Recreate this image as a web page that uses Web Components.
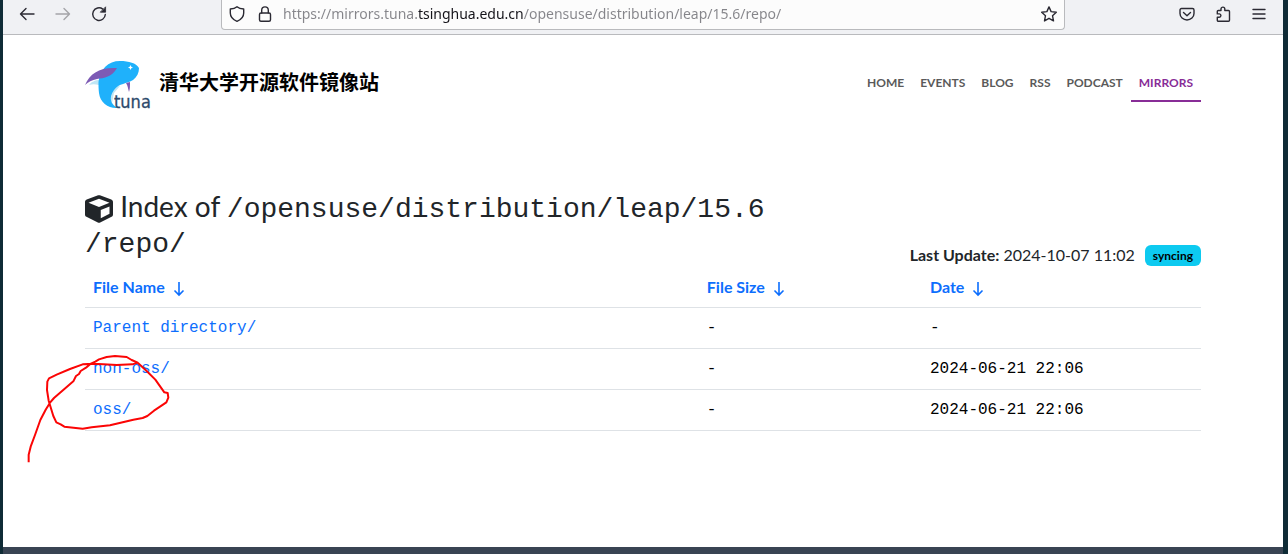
<!DOCTYPE html>
<html lang="zh-CN">
<head>
<meta charset="utf-8">
<title>Index of /opensuse/distribution/leap/15.6/repo/</title>
<style>
  body {
    margin: 0;
    background: #0f2b36;
    font-family: Lato, "Noto Sans CJK SC", sans-serif;
    font-size: 16px;
    line-height: 24px;
    color: #212529;
  }
</style>
</head>
<body>

<browser-window>
  <browser-toolbar slot="toolbar" url="https://mirrors.tuna.tsinghua.edu.cn/opensuse/distribution/leap/15.6/repo/"></browser-toolbar>
  <site-header>
    <nav-link href="#home">HOME</nav-link>
    <nav-link href="#events">EVENTS</nav-link>
    <nav-link href="#blog">BLOG</nav-link>
    <nav-link href="#rss">RSS</nav-link>
    <nav-link href="#podcast">PODCAST</nav-link>
    <nav-link href="#mirrors" active>MIRRORS</nav-link>
  </site-header>
  <index-heading updated="2024-10-07 11:02">
    <status-badge slot="status">syncing</status-badge>
  </index-heading>
  <file-table>
    <pen-mark></pen-mark>
  </file-table>
</browser-window>

<script>
const ICONS = {
  back: `<path d="M15 8H1.500M7 2.500 1.500 8 7 13.500"/>`,
  forward: `<path d="M1 8h13.500M9 2.500 14.500 8 9 13.500"/>`,
  reload: `<path d="M14.300 8.500A6.300 6.300 0 1 1 11.800 3.100"/><path d="M14.600 1.200v5h-5z" fill="currentColor" stroke-width="0.800"/>`,
  shield: `<path d="M8 .8C6.300 2.300 4 2.900 1.300 3v4c0 3.600 2.500 6.600 6.700 8.300 4.200-1.700 6.700-4.700 6.700-8.300V3C12 2.900 9.700 2.300 8 .8z"/>`,
  lock: `<rect x="2.500" y="7" width="11" height="8.300" rx="1.500"/><path d="M4.700 7V4.200a3.300 3.300 0 0 1 6.600 0V7"/>`,
  star: `<path d="m8 .9 2.100 4.700 5.200.6-3.800 3.500 1 5.200L8 12.300l-4.500 2.600 1-5.200L.7 6.200l5.200-.6z"/>`,
  pocket: `<path d="M2.500 2.500h11A1.500 1.500 0 0 1 15 4v3.500a7 6.500 0 0 1-14 0V4a1.500 1.500 0 0 1 1.500-1.500z"/><path d="M4.500 6.500 8 9.700l3.500-3.200"/>`,
  puzzle: `<path d="M6 4.500V3a1.900 1.900 0 0 1 3.800 0v1.500h3.700a1 1 0 0 1 1 1v8.700a1 1 0 0 1-1 1H3.300a1 1 0 0 1-1-1v-2.900h1.900a1.700 1.700 0 0 0 0-3.400H2.300V5.500a1 1 0 0 1 1-1z"/>`,
  menu: `<path d="M2 3.500h12M2 8h12M2 12.500h12"/>`
};

class ToolIcon extends HTMLElement {
  constructor() {
    super();
    this.attachShadow({ mode: "open" });
  }

  connectedCallback() {
    this.shadowRoot.innerHTML = `
      <style>
        :host { display: block; width: 16px; height: 16px; }
        svg { display: block; fill: none; stroke: currentColor; stroke-width: 1.4; stroke-linejoin: round; stroke-linecap: round; }
      </style>
      <svg width="16" height="16" viewBox="0 0 16 16" aria-hidden="true">${ICONS[this.getAttribute("name")]}</svg>
    `;
  }
}

class BrowserToolbar extends HTMLElement {
  constructor() {
    super();
    this.attachShadow({ mode: "open" });
  }

  get styles() {
    return `
      :host {
        display: flex;
        align-items: start;
        justify-content: space-between;
        height: 34px;
        background: #f0f1f4;
        border-bottom: 1px solid #b9babd;
        color: #2b2a33;
      }

      button {
        border: 0;
        padding: 0;
        background: none;
        color: inherit;
      }

      button:disabled { color: #a4a4a8; }

      .group {
        display: flex;
        gap: 20px;
        padding: 6px 16px;
      }

      .address {
        box-sizing: border-box;
        display: flex;
        align-items: center;
        gap: 10px;
        flex: 0 1 844px;
        height: 30px;
        padding: 0 7px 1px;
        margin-left: 90px;
        margin-right: 90px;
        background: #fcfcfc;
        border: 1px solid #b9babd;
        border-top: 0;
        border-radius: 0 0 4px 4px;
      }

      .site {
        display: flex;
        gap: 12px;
      }

      /* the registered domain reads darker than the rest of the address */
      input {
        flex: 1;
        min-width: 0;
        border: 0;
        padding: 0;
        outline: 0;
        font: 14px/20px "Noto Sans", sans-serif;
        color: #85858a;
        background: linear-gradient(90deg, #85858a 135px, #15141a 135px 241px, #85858a 241px);
        -webkit-background-clip: text;
        background-clip: text;
        -webkit-text-fill-color: transparent;
      }
    `;
  }

  connectedCallback() {
    this.shadowRoot.innerHTML = `
      <style>${this.styles}</style>
      <div class="group">
        <button aria-label="Back"><tool-icon name="back"></tool-icon></button>
        <button aria-label="Forward" disabled><tool-icon name="forward"></tool-icon></button>
        <button aria-label="Reload"><tool-icon name="reload"></tool-icon></button>
      </div>
      <div class="address">
        <div class="site">
          <button aria-label="Protection"><tool-icon name="shield"></tool-icon></button>
          <button aria-label="Site information"><tool-icon name="lock"></tool-icon></button>
        </div>
        <input type="text" aria-label="Address" value="${this.getAttribute("url")}">
        <button aria-label="Bookmark"><tool-icon name="star"></tool-icon></button>
      </div>
      <div class="group">
        <button aria-label="Pocket"><tool-icon name="pocket"></tool-icon></button>
        <button aria-label="Extensions"><tool-icon name="puzzle"></tool-icon></button>
        <button aria-label="Menu"><tool-icon name="menu"></tool-icon></button>
      </div>
    `;
  }
}

class BrowserWindow extends HTMLElement {
  constructor() {
    super();
    this.attachShadow({ mode: "open" });
    this.shadowRoot.innerHTML = `
      <style>
        :host {
          display: flex;
          flex-direction: column;
          min-height: 100vh;
          margin: 0 5px 0 3px;
          background: #fff;
        }

        main {
          box-sizing: border-box;
          flex: 1;
          width: 100%;
          max-width: 1140px;
          margin: 0 auto;
          padding: 0 12px;
        }

        footer {
          height: 7px;
          background: #394453;
        }
      </style>
      <slot name="toolbar"></slot>
      <main><slot></slot></main>
      <footer></footer>
    `;
  }
}

class TunaLogo extends HTMLElement {
  constructor() {
    super();
    this.attachShadow({ mode: "open" });
    this.shadowRoot.innerHTML = `
      <style>
        :host { display: block; }
        svg { display: block; overflow: visible; }
        text { font: 18px "DejaVu Sans Condensed", sans-serif; fill: #2d4a6b; stroke: #2d4a6b; stroke-width: 0.3; }
      </style>
      <svg width="65" height="50" viewBox="0 0 65 50" role="img" aria-label="TUNA">
        <path fill="#bfe6f5" d="M4 25c2-3 6-5 11-5l-1 5c-4-1-7-1-10 0zM26 27c-2 6-2 12 1 16l2-10 6-7z"/>
        <path fill="#1fb1fb" d="M13.500 22C15 9 23 1 35 1c9 0 16 2 19 7 0 5-2 9-6 12-6 4-14 3-19 10-6 8-3 15 4 18-9 1-18-5-19-15-.5-4-.5-8-.5-11z"/>
        <path fill="#7d5bb5" d="M0 25C5 13 15 7 32 8c-5 9-13 10-20 11-5 1-9 3-12 6zM41 23l4-1c0 4 0 7-1 10-1-3-1-6-3-9z"/>
        <path fill="#fff" d="m45.500 5 .8 1.700 1.700.8-1.700.8-.8 1.700-.8-1.700-1.700-.8 1.700-.8z"/>
        <text x="29" y="48">tuna</text>
      </svg>
    `;
  }
}

class NavLink extends HTMLElement {
  constructor() {
    super();
    this.attachShadow({ mode: "open" });
  }

  connectedCallback() {
    this.shadowRoot.innerHTML = `
      <style>
        :host { display: block; }

        a {
          display: block;
          padding: 8px;
          border-bottom: 2px solid transparent;
          font-size: 12px;
          font-weight: 700;
          line-height: 18px;
          color: #5a5a5a;
          text-decoration: none;
        }

        :host([active]) a {
          color: #882d97;
          border-color: #882d97;
        }
      </style>
      <a href="${this.getAttribute("href")}"><slot></slot></a>
    `;
  }
}

class SiteHeader extends HTMLElement {
  constructor() {
    super();
    this.attachShadow({ mode: "open" });
    this.shadowRoot.innerHTML = `
      <style>
        :host {
          display: flex;
          align-items: center;
          justify-content: space-between;
          padding: 23px 0;
          margin-bottom: 56px;
        }

        .brand {
          display: flex;
          gap: 9px;
          padding-top: 2px;
          color: #000;
          text-decoration: none;
        }

        h1 {
          margin: 0;
          font: 700 20px/44px "Noto Sans CJK SC", sans-serif;
        }

        nav { display: flex; }
      </style>
      <a class="brand" href="#top">
        <tuna-logo></tuna-logo>
        <h1>清华大学开源软件镜像站</h1>
      </a>
      <nav><slot></slot></nav>
    `;
  }
}

class StatusBadge extends HTMLElement {
  constructor() {
    super();
    this.attachShadow({ mode: "open" });
    this.shadowRoot.innerHTML = `
      <style>
        :host {
          display: inline-block;
          padding: 4px 8px;
          border-radius: 6px;
          background: #0dcaf0;
          color: #000;
          font-size: 12px;
          font-weight: 700;
          line-height: 13px;
        }
      </style>
      <slot></slot>
    `;
  }
}

class IndexHeading extends HTMLElement {
  constructor() {
    super();
    this.attachShadow({ mode: "open" });
  }

  connectedCallback() {
    this.shadowRoot.innerHTML = `
      <style>
        :host {
          display: flex;
          align-items: end;
          justify-content: space-between;
          gap: 24px;
        }

        h2 {
          flex: 0 1 66%;
          margin: 0;
          padding-bottom: 8px;
          font-size: 28px;
          font-weight: 400;
          line-height: 35px;
        }

        h2 svg { vertical-align: -6px; }

        /* shorter than the heading's line, so that the second font does not stretch it */
        .path {
          font-family: "Liberation Mono", monospace;
          line-height: 24px;
        }

        .path span { white-space: nowrap; }

        .update {
          display: flex;
          align-items: center;
          gap: 10px;
          white-space: nowrap;
        }
      </style>
      <h2>
        <svg width="28" height="28" viewBox="0 0 512 512" fill="currentColor" aria-hidden="true"><path d="M239.100 6.300l-208 78c-18.700 7-31.100 25-31.100 45v225.100c0 18.200 10.300 34.800 26.500 42.900l208 104c13.500 6.800 29.400 6.800 42.900 0l208-104c16.300-8.100 26.500-24.800 26.500-42.900V129.300c0-20-12.400-37.900-31.100-44.900l-208-78C262 2.200 250 2.200 239.100 6.300zM256 68.400l192 72v1.100l-192 78-192-78v-1.100l192-72zm32 356V275.500l160-65v133.900l-160 80z"/></svg>
        Index of <span class="path"><span>/opensuse/distribution/leap/15.6</span><wbr><span>/repo/</span></span>
      </h2>
      <div class="update">
        <span><b>Last Update:</b> ${this.getAttribute("updated")}</span>
        <slot name="status"></slot>
      </div>
    `;
  }
}

const FILES = [
  { name: "Parent directory/", href: "../", size: "-", date: "-" },
  { name: "non-oss/", href: "non-oss/", size: "-", date: "2024-06-21 22:06" },
  { name: "oss/", href: "oss/", size: "-", date: "2024-06-21 22:06" }
];

class FileTable extends HTMLElement {
  constructor() {
    super();
    this.attachShadow({ mode: "open" });
  }

  get styles() {
    return `
      :host {
        display: block;
        position: relative;
      }

      table {
        width: 100%;
        table-layout: fixed;
        border-collapse: separate;
        border-spacing: 0;
      }

      th, td {
        box-sizing: border-box;
        padding: 8px;
        border-bottom: 1px solid #dee2e6;
        text-align: left;
      }

      .name { width: 55%; }
      .size { width: 20%; }
      .date { width: 25%; }

      td {
        font-family: "Liberation Mono", monospace;
        color: #000;
      }

      a {
        color: #0d6efd;
        text-decoration: none;
      }

      th svg {
        margin-left: 4px;
        vertical-align: -4px;
        fill: none;
        stroke: currentColor;
        stroke-width: 1.6;
      }
    `;
  }

  header(label, key) {
    return `
      <th class="${key}"><a href="#sort-${key}">${label}
        <svg width="12" height="16" viewBox="0 0 12 16" aria-hidden="true"><path d="M6 1v13M1.500 9.500 6 14l4.500-4.500"/></svg></a></th>
    `;
  }

  connectedCallback() {
    this.shadowRoot.innerHTML = `
      <style>${this.styles}</style>
      <table>
        <thead>
          <tr>${this.header("File Name", "name")}${this.header("File Size", "size")}${this.header("Date", "date")}</tr>
        </thead>
        <tbody>
          ${FILES.map(f => `<tr><td><a href="${f.href}">${f.name}</a></td><td>${f.size}</td><td>${f.date}</td></tr>`).join("")}
        </tbody>
      </table>
      <slot></slot>
    `;
  }
}

// red pen stroke lying over the last rows
class PenMark extends HTMLElement {
  constructor() {
    super();
    this.attachShadow({ mode: "open" });
    this.shadowRoot.innerHTML = `
      <style>
        :host {
          position: absolute;
          left: -75px;
          top: 73px;
          pointer-events: none;
        }

        svg { display: block; }
      </style>
      <svg width="200" height="130" viewBox="0 0 600 390" fill="none" stroke="#fb0505" stroke-width="6" stroke-linejoin="round" aria-hidden="true">
        <path d="M56 367V344L62 320 75 285 91 240 107 209 120 188 132 174 190 124 198 108 207 102 212 93 228 83 241 72 256 65 267 58 290 51 315 48 350 51 365 60 383 68 367 73 320 75 280 73 250 71 218 73 180 87 140 104 117 115 112 125 111 150 116 182 130 228 139 247 152 253 163 260 218 266 245 262 300 256 370 239 398 234 412 228 432 212 450 200 469 187 475 173 473 159 463 157 436 119 410 93 397 81 383 68"/>
      </svg>
    `;
  }
}

customElements.define("tool-icon", ToolIcon);
customElements.define("browser-toolbar", BrowserToolbar);
customElements.define("browser-window", BrowserWindow);
customElements.define("tuna-logo", TunaLogo);
customElements.define("nav-link", NavLink);
customElements.define("site-header", SiteHeader);
customElements.define("status-badge", StatusBadge);
customElements.define("index-heading", IndexHeading);
customElements.define("file-table", FileTable);
customElements.define("pen-mark", PenMark);
</script>
</body>
</html>
